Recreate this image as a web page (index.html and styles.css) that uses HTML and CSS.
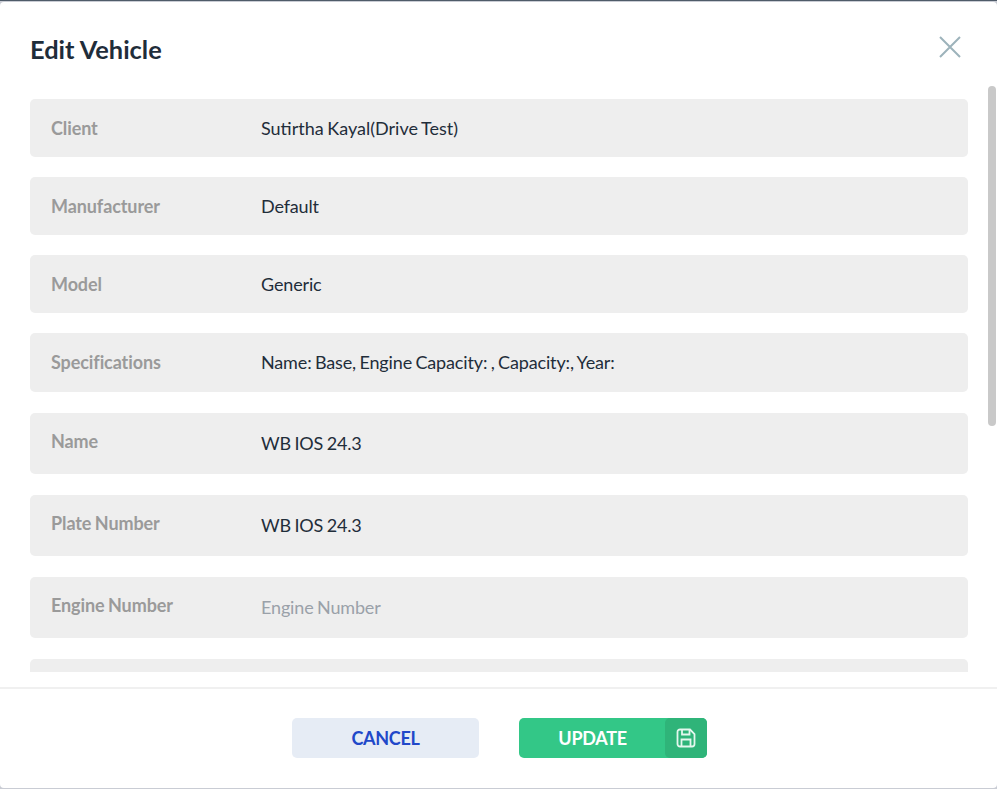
FILE: index.html
```html
<!DOCTYPE html>
<html lang="en">
<head>
<meta charset="utf-8">
<title>Edit Vehicle</title>
<link rel="stylesheet" href="styles.css">
</head>
<body>
<div class="modal">
  <header class="modal-header">
    <h1 class="modal-title">Edit Vehicle</h1>
    <svg class="close-icon" viewBox="0 0 22 22" width="22" height="22" aria-label="Close"><path d="M1 1L21 21M21 1L1 21"/></svg>
  </header>
  <div class="modal-body">
    <div class="field"><span class="field-label">Client</span><span class="field-value field-value-loose">Sutirtha Kayal(Drive Test)</span></div>
    <div class="field"><span class="field-label">Manufacturer</span><span class="field-value">Default</span></div>
    <div class="field"><span class="field-label">Model</span><span class="field-value">Generic</span></div>
    <div class="field field-tall"><span class="field-label">Specifications</span><span class="field-value">Name: Base, Engine Capacity: , Capacity:, Year:</span></div>
    <div class="field field-input"><span class="field-label">Name</span><span class="field-value">WB IOS 24.3</span></div>
    <div class="field field-input"><span class="field-label">Plate Number</span><span class="field-value">WB IOS 24.3</span></div>
    <div class="field field-input"><span class="field-label">Engine Number</span><span class="field-value field-placeholder">Engine Number</span></div>
    <div class="field field-input"></div>
    <div class="scroll-thumb"></div>
  </div>
  <footer class="modal-footer">
    <button class="btn btn-cancel">CANCEL</button>
    <button class="btn btn-update"><span class="btn-text">UPDATE</span><span class="btn-icon"><svg viewBox="0 0 20 20" width="20" height="20"><path d="M4 1.5H14L18.5 6V16A2.5 2.5 0 0 1 16 18.5H4A2.5 2.5 0 0 1 1.5 16V4A2.5 2.5 0 0 1 4 1.5Z"/><path d="M6 1.5V6.5H13.5V1.5"/><path d="M5.5 18.5V11.5H14.5V18.5"/></svg></span></button>
  </footer>
</div>
</body>
</html>
```
FILE: styles.css
```css
* { box-sizing: border-box; }
html, body { margin: 0; height: 100%; }
body {
  background: #c9ccd4;
  font-family: Lato, "Liberation Sans", sans-serif;
  overflow: hidden;
  border-top: 1px solid #4f5b69;
}
.modal {
  position: relative;
  height: 786px;
  margin-top: 1px;
  background: #fff;
  border-radius: 4px;
  display: flex;
  flex-direction: column;
}
.modal-header {
  height: 84px;
  padding: 0 36px 0 30px;
  display: flex;
  align-items: flex-start;
  justify-content: space-between;
  flex: none;
}
.modal-title {
  margin: 29px 0 0;
  font-size: 25.4px;
  line-height: 36px;
  font-weight: 700;
  color: #1f2d3a;
}
.close-icon { margin-top: 34px; fill: none; stroke: #9db3bb; stroke-width: 2; }
.modal-body {
  position: relative;
  height: 586px;
  margin-bottom: 15px;
  padding: 13px 29px 0 30px;
  overflow: hidden;
  flex: none;
}
.field {
  display: flex;
  align-items: center;
  height: 58px;
  margin-bottom: 20px;
  padding-left: 21px;
  background: #eee;
  border-radius: 5px;
  font-size: 18px;
  letter-spacing: -0.15px;
  word-spacing: -1px;
}
.field-tall { height: 59px; margin-bottom: 21px; padding-bottom: 2px; }
.field-input { height: 61px; margin-bottom: 21px; }
.field-label {
  width: 210px;
  flex: none;
  font-weight: 700;
  color: #9a9a9a;
  font-size: 18px;
  letter-spacing: -0.1px;
  word-spacing: -0.8px;
}
.field-input .field-label { margin-top: -6px; }
.field-input .field-value { margin-top: -1px; }
.field-value { color: #1f2d3a; }
.field-value-loose { letter-spacing: 0; word-spacing: -1px; }
.field-placeholder { color: #9aa1a9; }
.scroll-thumb {
  position: absolute;
  top: 0;
  right: 1px;
  width: 8px;
  height: 340px;
  border-radius: 4px;
  background: #c9c9c9;
}
.modal-footer {
  flex: 1;
  border-top: 2px solid #f0f0f0;
  display: flex;
  justify-content: center;
  align-items: flex-start;
  gap: 40px;
  padding-top: 29px;
  padding-left: 2px;
}
.btn {
  height: 40px;
  border: 0;
  border-radius: 5px;
  font-family: inherit;
  font-size: 18px;
  font-weight: 700;
  padding: 0;
  letter-spacing: -0.3px;
}
.btn-cancel { width: 187px; background: #e6ecf5; color: #2148c9; }
.btn-update {
  width: 188px;
  background: #33c787;
  color: #fff;
  display: flex;
  align-items: stretch;
  overflow: hidden;
}
.btn-text { flex: 1; display: flex; align-items: center; justify-content: center; padding-left: 1px; }
.btn-icon {
  width: 42px;
  background: #2fb479;
  display: flex;
  align-items: center;
  justify-content: center;
  border-radius: 5px 0 0 5px;
}
.btn-icon svg { fill: none; stroke: #e4f7ee; stroke-width: 1.8; }
```
